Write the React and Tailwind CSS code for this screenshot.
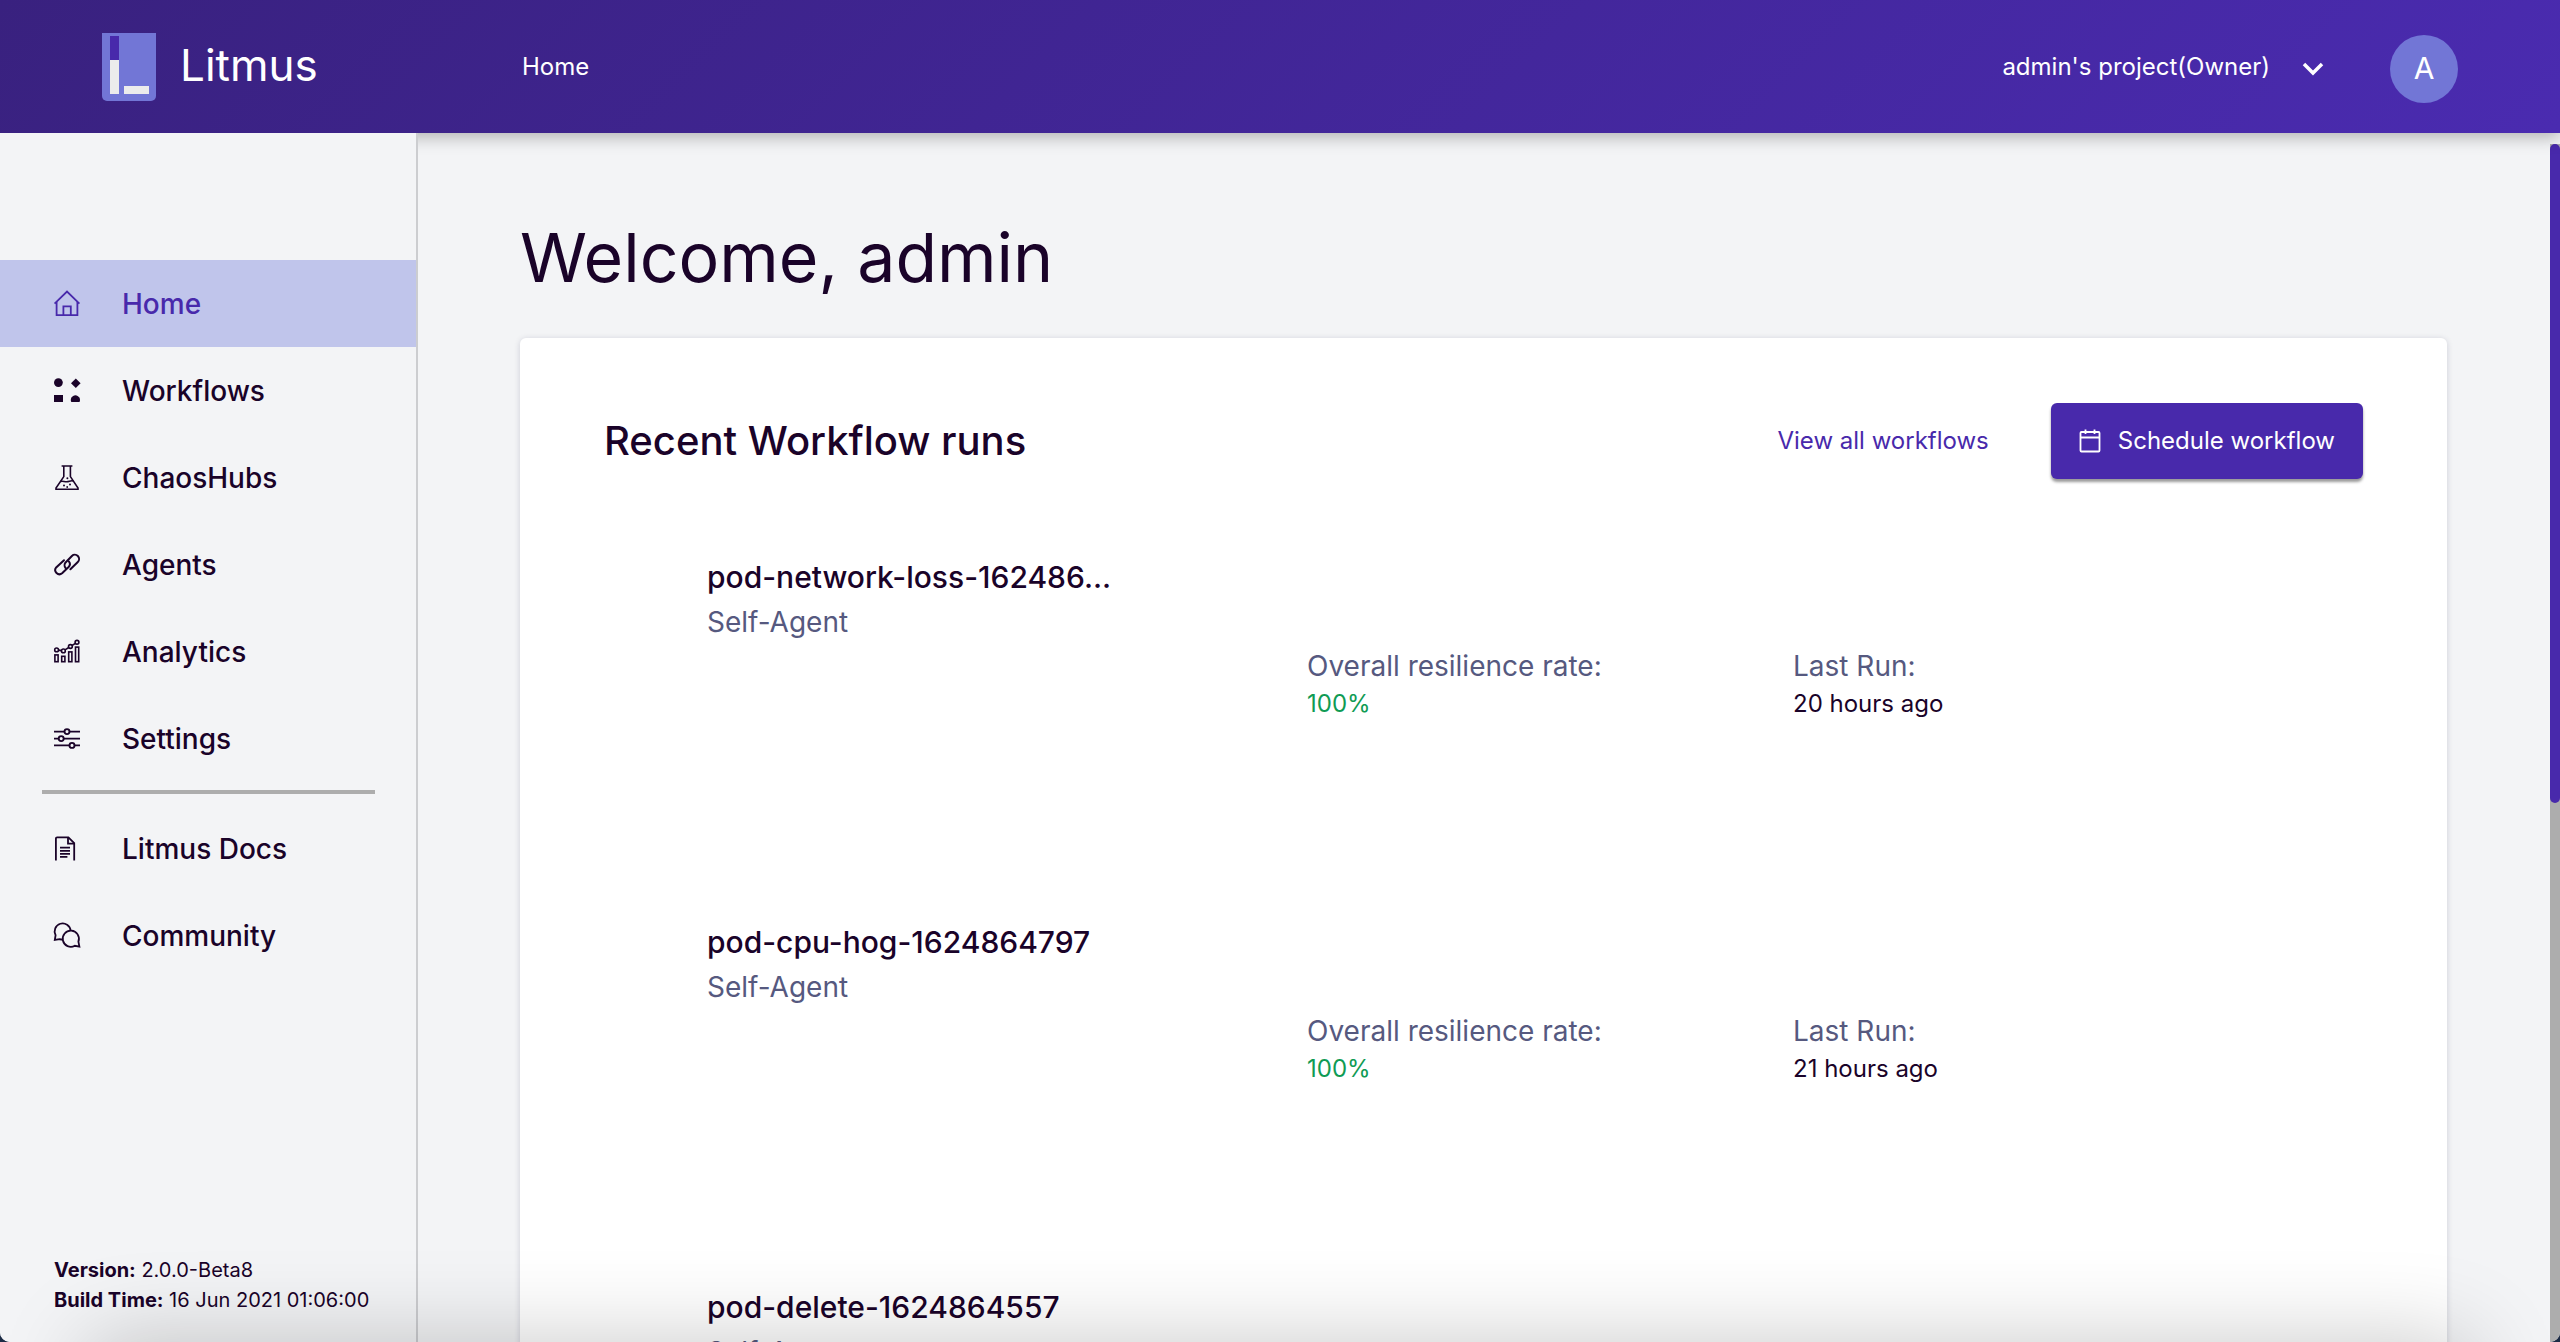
const navMain = [
  { label: 'Home', icon: HomeIcon, active: true },
  { label: 'Workflows', icon: WorkflowsIcon },
  { label: 'ChaosHubs', icon: HubIcon },
  { label: 'Agents', icon: AgentsIcon },
  { label: 'Analytics', icon: AnalyticsIcon },
  { label: 'Settings', icon: SettingsIcon },
];

const navExtra = [
  { label: 'Litmus Docs', icon: DocsIcon },
  { label: 'Community', icon: CommunityIcon },
];

const runs = [
  { name: 'pod-network-loss-162486...', agent: 'Self-Agent', rate: '100%', last: '20 hours ago' },
  { name: 'pod-cpu-hog-1624864797', agent: 'Self-Agent', rate: '100%', last: '21 hours ago' },
  { name: 'pod-delete-1624864557', agent: 'Self-Agent', rate: '100%', last: '21 hours ago' },
];

function Icon({ children, ...rest }) {
  return (
    <svg viewBox="0 0 26 26" className="h-[26px] w-[26px] shrink-0 overflow-visible" fill="none" stroke="currentColor" strokeWidth="1.8" aria-hidden="true" {...rest}>
      {children}
    </svg>
  );
}

function HomeIcon() {
  return (
    <Icon>
      <path d="M.6 12.600 13 .6l12.400 12" />
      <path d="M2.600 11v13.200h20.800V11" />
      <path d="M9.400 24.200v-8.800h7.400v8.800" />
    </Icon>
  );
}

function WorkflowsIcon() {
  return (
    <Icon fill="currentColor" stroke="none">
      <circle cx="4.400" cy="4.600" r="4.400" />
      <path d="M21.800.4 26.600 5.200 21.800 10 17 5.200z" />
      <rect x="0" y="17" width="9" height="7" />
      <path d="M17.300 24a4.600 4.600 0 1 1 8.200 0z" />
    </Icon>
  );
}

function HubIcon() {
  return (
    <Icon strokeWidth="1.600">
      <path d="M7.600 1h10.800M9.800 1v10.600L2 23v1.200h22V23L16.400 11.600V1" />
      <path d="M6.400 16.600c2-1.200 4 .4 6.400.2 2.600-.2 4-1.600 6.600-.8" />
      <g fill="currentColor" stroke="none">
        <circle cx="13.400" cy="13.200" r="1" />
        <circle cx="10" cy="20.600" r="1" />
        <circle cx="16" cy="19.400" r="1" />
        <circle cx="13.200" cy="22" r=".9" />
      </g>
    </Icon>
  );
}

function AgentsIcon() {
  return (
    <Icon strokeWidth="2" strokeLinecap="round">
      <path d="M10 8.200 2.200 15.400a4.200 4.200 0 0 0 5.900 5.900L14.600 15a4.200 4.200 0 0 0 .2-5.600" />
      <path d="M16.400 17.200 23.800 10a4.200 4.200 0 0 0-5.900-6L11.800 10.300a4.200 4.200 0 0 0-.2 5.700" />
    </Icon>
  );
}

function AnalyticsIcon() {
  return (
    <Icon strokeWidth="1.600">
      <rect x=".9" y="15.900" width="3.200" height="6.800" />
      <rect x="7.700" y="17.300" width="3.200" height="5.400" />
      <rect x="14.700" y="12.900" width="3.200" height="9.800" />
      <rect x="21.500" y="8.100" width="3.200" height="14.600" />
      <circle cx="2.600" cy="10.900" r="1.900" />
      <circle cx="9.400" cy="11.900" r="1.900" />
      <circle cx="16.400" cy="7.500" r="1.900" />
      <circle cx="23" cy="3.300" r="1.900" />
      <path d="M4.500 11.100l3 .5M11 10.900l3.800-2.400M18 6.500l3.400-2.200" />
    </Icon>
  );
}

function SettingsIcon() {
  return (
    <Icon strokeWidth="1.900">
      <path d="M0 5.600h10.400M15.600 5.600H26M0 12.600h4.600M9.800 12.600H26M0 19.400h15.400M20.600 19.400H26" />
      <circle cx="13" cy="5.600" r="2.500" />
      <circle cx="7.200" cy="12.600" r="2.500" />
      <circle cx="18" cy="19.400" r="2.500" />
    </Icon>
  );
}

function DocsIcon() {
  return (
    <Icon>
      <path d="M1.900 24.600V2.600a1.200 1.200 0 0 1 1.200-1.200h11.300l5.800 5.800v17.400" />
      <path d="M14 1.400v6.200h6.200" />
      <path d="M6 11.600h10M6 14.800h10M6 17.800h10M6 20.800h7.400" />
    </Icon>
  );
}

function CommunityIcon() {
  return (
    <Icon strokeWidth="1.800">
      <path d="M16.600 7.600A8 8 0 1 0 1.600 12.200L.8 17l4.800-.8c.9.300 1.800.5 2.800.5" />
      <path d="M24.400 18.600a8.100 8.100 0 1 0-3.600 4.200l4.600.8z" />
    </Icon>
  );
}

function CalendarIcon() {
  return (
    <svg viewBox="0 0 22 24" className="h-6 w-[22px] shrink-0" fill="none" stroke="currentColor" strokeWidth="1.800" aria-hidden="true">
      <rect x="1.500" y="3" width="19" height="19.500" rx="1" />
      <path d="M1.500 8.500h19M6.500 .5v4.500M15.500 .5v4.500" />
    </svg>
  );
}

function Logo() {
  return (
    <svg viewBox="0 0 54 68" className="h-[68px] w-[54px]" aria-hidden="true">
      <path d="M0 0h54v63a5 5 0 0 1-5 5H5a5 5 0 0 1-5-5z" fill="#7276d6" />
      <rect x="8" y="3" width="9" height="24" fill="#4829ab" />
      <rect x="8" y="27" width="9" height="34" fill="#ececec" />
      <rect x="22" y="53" width="25" height="8" fill="#ececec" />
    </svg>
  );
}

function NavItem({ label, icon: Glyph, active }) {
  return (
    <li>
      <a
        href="#"
        aria-current={active ? 'page' : undefined}
        className={
          active
            ? 'flex h-[87px] items-center gap-[42px] bg-[#c0c5eb] pl-[54px] text-[28px] font-medium text-[#4829ab]'
            : 'flex h-[87px] items-center gap-[42px] pl-[54px] text-[28px] font-medium'
        }
      >
        <Glyph />
        <span>{label}</span>
      </a>
    </li>
  );
}

function Header() {
  return (
    <header className="z-10 flex h-[133px] shrink-0 items-center bg-[linear-gradient(135deg,#39217f,#4a2bb0)] px-[102px] text-white shadow-[0_4px_16px_rgba(0,0,0,0.28)]">
      <a href="#" className="flex w-[420px] items-center gap-6">
        <Logo />
        <span className="pb-1 text-[44px] leading-none">Litmus</span>
      </a>
      <a href="#" className="text-[24px]">Home</a>
      <button type="button" className="ml-auto flex items-center gap-8 text-[24px]">
        <span>admin&apos;s project(Owner)</span>
        <svg viewBox="0 0 22 14" className="mt-1 h-[14px] w-[22px]" fill="none" stroke="currentColor" strokeWidth="3.500" aria-hidden="true">
          <path d="M2 2l9 9 9-9" />
        </svg>
      </button>
      <button type="button" aria-label="Account" className="mt-1 ml-[66px] flex h-[68px] w-[68px] items-center justify-center rounded-full bg-[#7276d6] text-[30px]">
        A
      </button>
    </header>
  );
}

function Sidebar() {
  return (
    <nav aria-label="Main" className="z-20 flex w-[418px] shrink-0 flex-col border-r-2 border-[#cccdd0] bg-[#f3f4f6] pt-[127px]">
      <ul>
        {navMain.map((item) => (
          <NavItem key={item.label} {...item} />
        ))}
      </ul>
      <hr className="mt-2 mr-[41px] mb-[11px] ml-[42px] border-t-4 border-[#adadad]" />
      <ul>
        {navExtra.map((item) => (
          <NavItem key={item.label} {...item} />
        ))}
      </ul>
      <div className="mt-auto pb-[27px] pl-[54px] text-[20px] leading-[30px]">
        <p><b>Version:</b> 2.0.0-Beta8</p>
        <p><b>Build Time:</b> 16 Jun 2021 01:06:00</p>
      </div>
    </nav>
  );
}

function Run({ name, agent, rate, last }) {
  return (
    <li className="grid h-[365px] grid-cols-[600px_486px_1fr] text-[28px] leading-[38px]">
      <div className="pt-1">
        <h3 className="text-[30px] leading-[46px] font-medium">{name}</h3>
        <p className="leading-[44px] text-[#56597f]">{agent}</p>
      </div>
      <div className="pt-[97px]">
        <p className="text-[#56597f]">Overall resilience rate:</p>
        <p className="text-[24px] text-[#109b54]">{rate}</p>
      </div>
      <div className="pt-[97px]">
        <p className="text-[#56597f]">Last Run:</p>
        <p className="text-[24px]">{last}</p>
      </div>
    </li>
  );
}

export default function App() {
  return (
    <div className="bg-[#1c2b45]">
      <div className="relative flex h-screen flex-col overflow-hidden rounded-b-[10px] bg-[#f3f4f6] font-['Inter',sans-serif] text-[#1a0329]">
        <Header />
        <div className="flex min-h-0 flex-1">
          <Sidebar />
          <main className="min-w-0 flex-1 overflow-hidden pt-[82px] pr-[103px] pl-[102px]">
            <h1 className="text-[68px] leading-[84px]">Welcome, admin</h1>
            <section className="mt-[39px] rounded-md bg-white px-[84px] pt-[65px] shadow-[0_1px_6px_rgba(20,20,60,0.16)]">
              <div className="flex items-center">
                <h2 className="text-[40px] font-medium">Recent Workflow runs</h2>
                <a href="#" className="mr-[62px] ml-auto text-[24px] text-[#4829ab]">View all workflows</a>
                <button type="button" className="flex h-[76px] items-center gap-[17px] rounded-md bg-[#4829ab] px-7 text-[24px] text-white shadow-[0_3px_3px_rgba(0,0,0,0.4)]">
                  <CalendarIcon />
                  Schedule workflow
                </button>
              </div>
              <ul className="mt-[71px] pl-[103px]">
                {runs.map((run) => (
                  <Run key={run.name} {...run} />
                ))}
              </ul>
            </section>
          </main>
          <div className="mt-[11px] w-[10px] shrink-0 bg-[#adadad]">
            <div className="h-[55%] rounded-full bg-[#4829ab]" />
          </div>
        </div>
        <div className="pointer-events-none absolute inset-x-[90px] top-full z-30 h-[200px] shadow-[0_0_90px_rgba(0,0,0,0.22)]" />
      </div>
    </div>
  );
}
